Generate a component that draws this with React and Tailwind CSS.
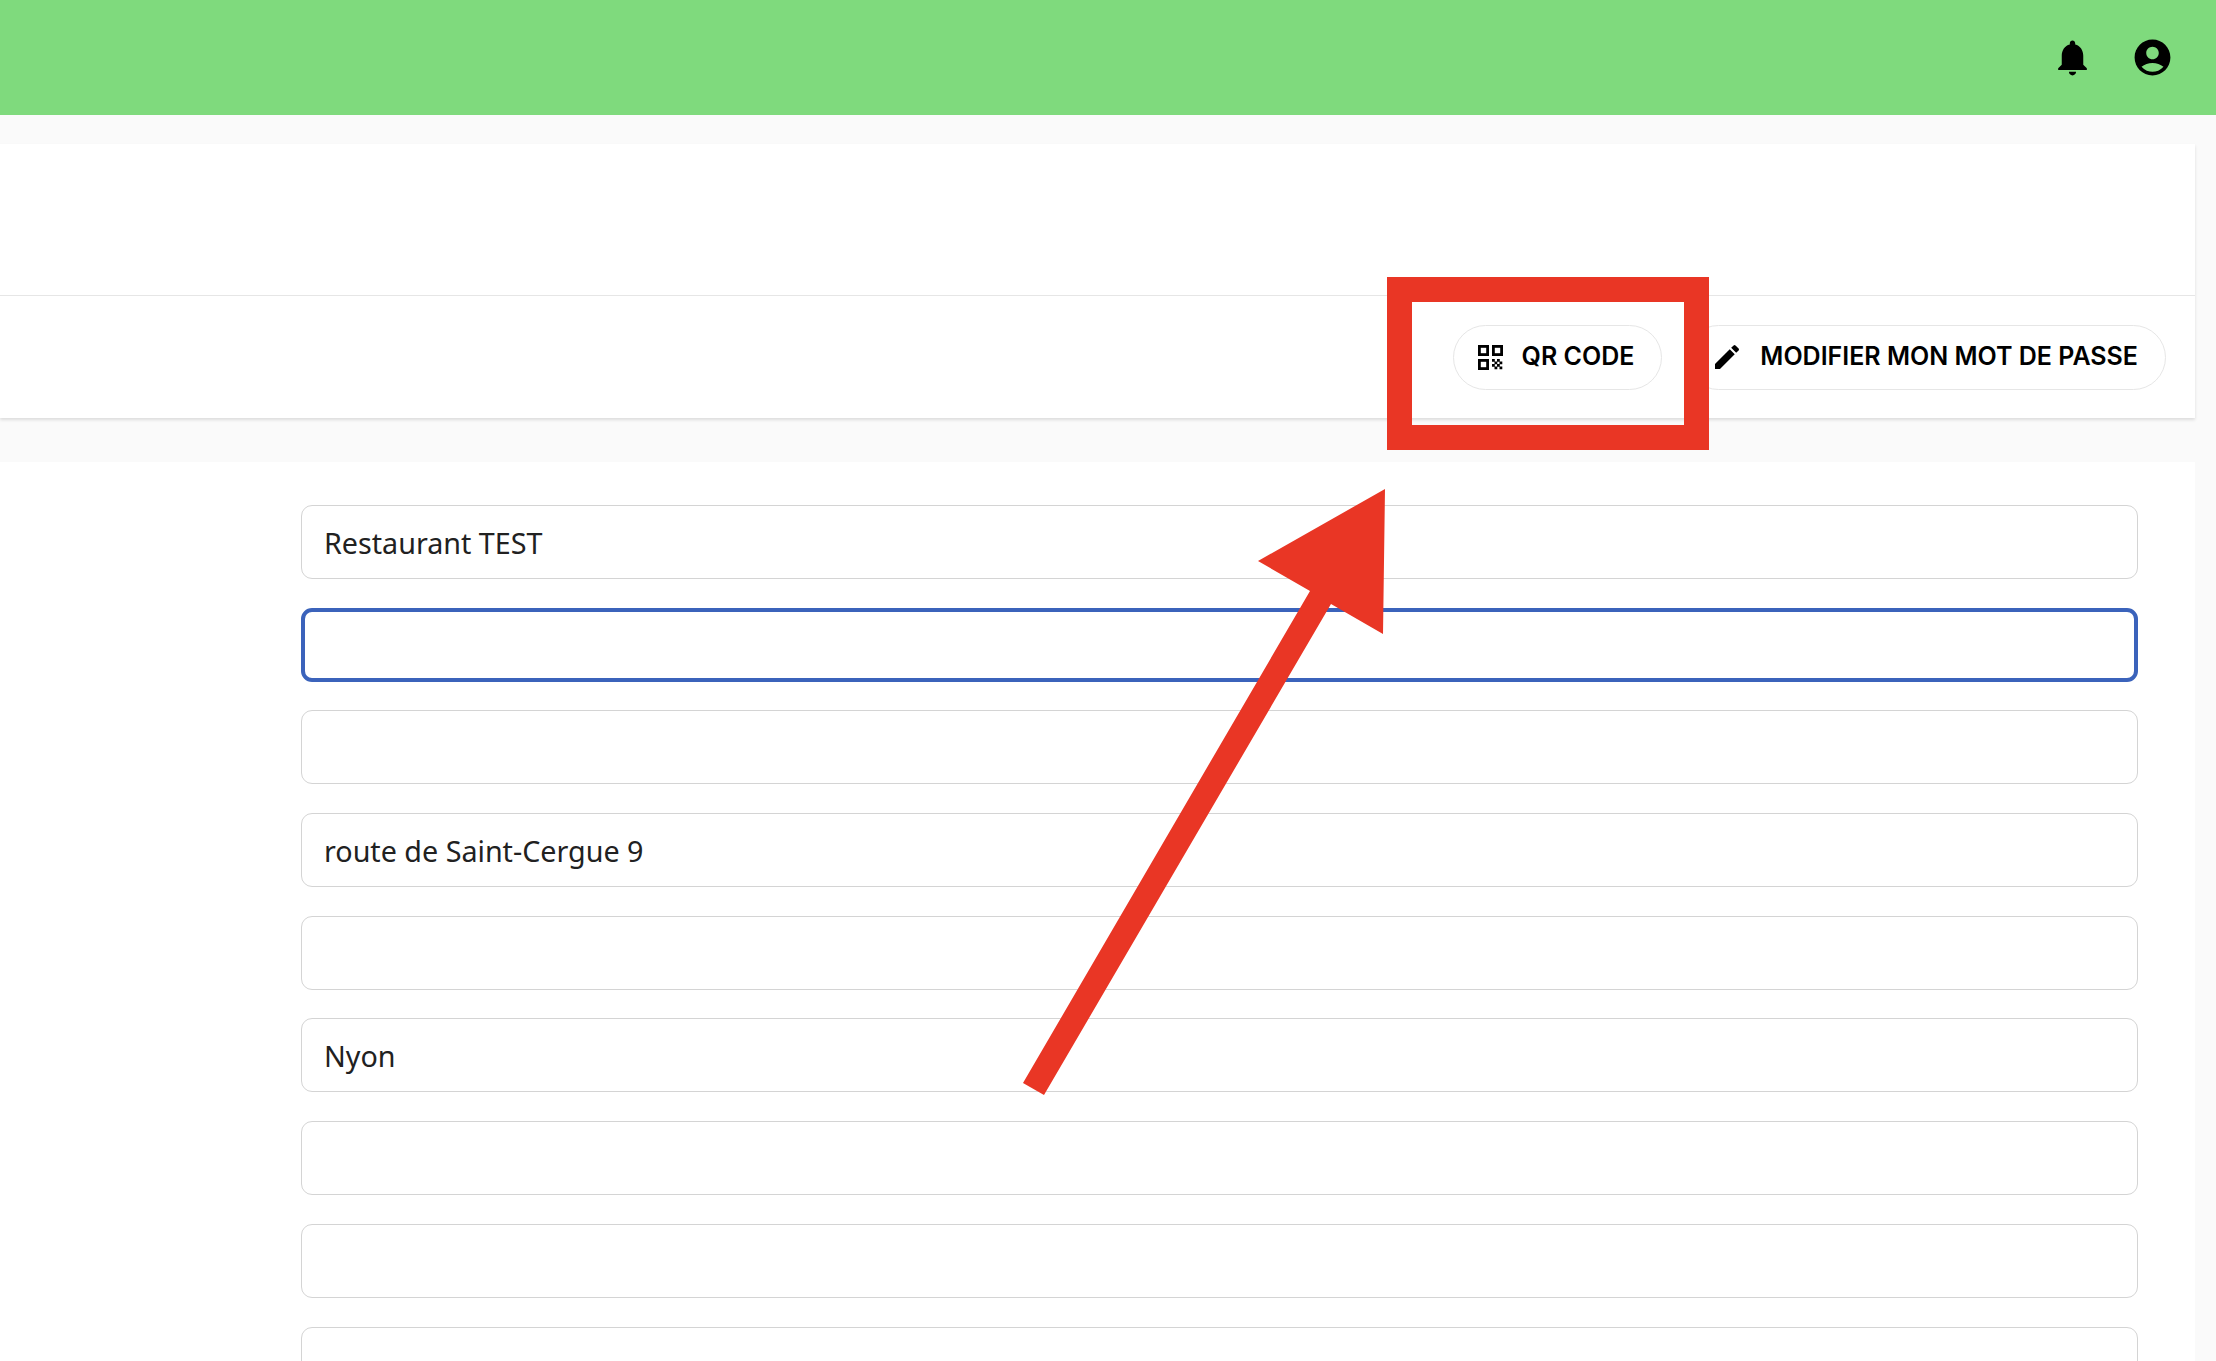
const fields = ["Restaurant TEST", "", "", "route de Saint-Cergue 9", "", "Nyon", "", "", ""];

function QrIcon() {
  return (
    <svg className="w-[25px] h-[25px] mr-[19px] shrink-0" viewBox="0 0 25 25" fill="none">
      <rect x="1.4" y="1.4" width="8.2" height="8.2" stroke="#000" strokeWidth="2.8" />
      <rect x="15.4" y="1.4" width="8.2" height="8.2" stroke="#000" strokeWidth="2.8" />
      <rect x="1.4" y="15.4" width="8.2" height="8.2" stroke="#000" strokeWidth="2.8" />
      <path
        fill="#000"
        d="M14 14h2.8v2.8H14zM19 14h2.8v2.8H19zM16.500 16.500h2.800v2.800h-2.800zM21.500 16.500h2.800v2.800h-2.800zM14 19h2.800v2.800H14zM19 19h2.800v2.800H19zM16.500 21.500h2.800v2.800h-2.800zM21.500 21.500h2.800v2.800h-2.800z"
      />
    </svg>
  );
}

function PencilIcon() {
  return (
    <svg className="w-8 h-8 mr-[17px] shrink-0" viewBox="0 0 24 24" fill="#000">
      <path d="M3 17.25V21h3.75L17.81 9.94l-3.75-3.75L3 17.25zM20.71 7.04c.39-.39.39-1.02 0-1.41l-2.34-2.34a.9959.9959 0 0 0-1.41 0l-1.83 1.83 3.75 3.75 1.83-1.83z" />
    </svg>
  );
}

function PillButton({ icon, label }) {
  return (
    <button className="h-[65px] flex items-center rounded-full border border-[#e6e6e6] bg-white pl-6 pr-[27px] font-['Inter',sans-serif] font-semibold text-[25px] text-black whitespace-nowrap">
      {icon}
      {label}
    </button>
  );
}

export default function App() {
  return (
    <div className="relative h-screen overflow-hidden bg-[#fafafa]">
      <header className="h-[115px] bg-[#7fda7d] flex items-center justify-end pr-[42px] gap-[37px] pb-[1px]">
        <svg className="w-[43px] h-[43px]" viewBox="0 0 24 24" fill="#000">
          <path d="M12 22c1.100 0 2-.9 2-2h-4c0 1.100.89 2 2 2zm6-6v-5c0-3.070-1.640-5.640-4.500-6.320V4c0-.83-.67-1.500-1.500-1.500s-1.500.67-1.500 1.500v.68C7.630 5.360 6 7.920 6 11v5l-2 2v1h16v-1l-2-2z" />
        </svg>
        <svg className="w-[43px] h-[43px]" viewBox="0 0 24 24" fill="#000">
          <path d="M12 2C6.480 2 2 6.480 2 12s4.480 10 10 10 10-4.480 10-10S17.520 2 12 2zm0 4c1.930 0 3.500 1.570 3.500 3.500S13.930 13 12 13s-3.500-1.570-3.500-3.500S10.070 6 12 6zm0 14c-2.030 0-4.430-.82-6.140-2.880C7.550 15.800 9.680 15 12 15s4.450.8 6.140 2.120C16.430 19.180 14.030 20 12 20z" />
        </svg>
      </header>

      <main className="pt-[29px] pr-[21px]">
        <section className="bg-white shadow-[0_2px_3px_rgba(0,0,0,0.12)]">
          <div className="h-[152px] border-b border-[#e6e6e6]" />
          <div className="h-[122px] flex items-center justify-end pr-[29px] gap-[24px]">
            <PillButton icon={<QrIcon />} label="QR CODE" />
            <PillButton icon={<PencilIcon />} label="MODIFIER MON MOT DE PASSE" />
          </div>
        </section>

        <section className="mt-[44px] bg-white pl-[301px] pr-[57px] pt-[43.05px] flex flex-col gap-[28.7px]">
          {fields.map((value, i) => (
            <input
              key={i}
              readOnly
              defaultValue={value}
              className={`h-[74px] w-full shrink-0 rounded-[11px] bg-white font-['Noto_Sans',sans-serif] text-[28.7px] text-[#212121] outline-none ${
                i === 1 ? "border-4 border-[#3b63bb]" : "border border-[#d4d4d4] px-[22px]"
              }`}
            />
          ))}
        </section>
      </main>

      {/* annotations drawn on top of the screenshot */}
      <div className="absolute left-[1387px] top-[277px] w-[322px] h-[173px] border-[25px] border-[#e93625]" />
      <svg className="absolute inset-0 w-full h-full pointer-events-none" viewBox="0 0 2216 1361">
        <polygon
          fill="#e93625"
          points="1385,489 1383,634 1331,604 1044,1095 1023,1083 1310,591 1258,561"
        />
      </svg>
    </div>
  );
}
